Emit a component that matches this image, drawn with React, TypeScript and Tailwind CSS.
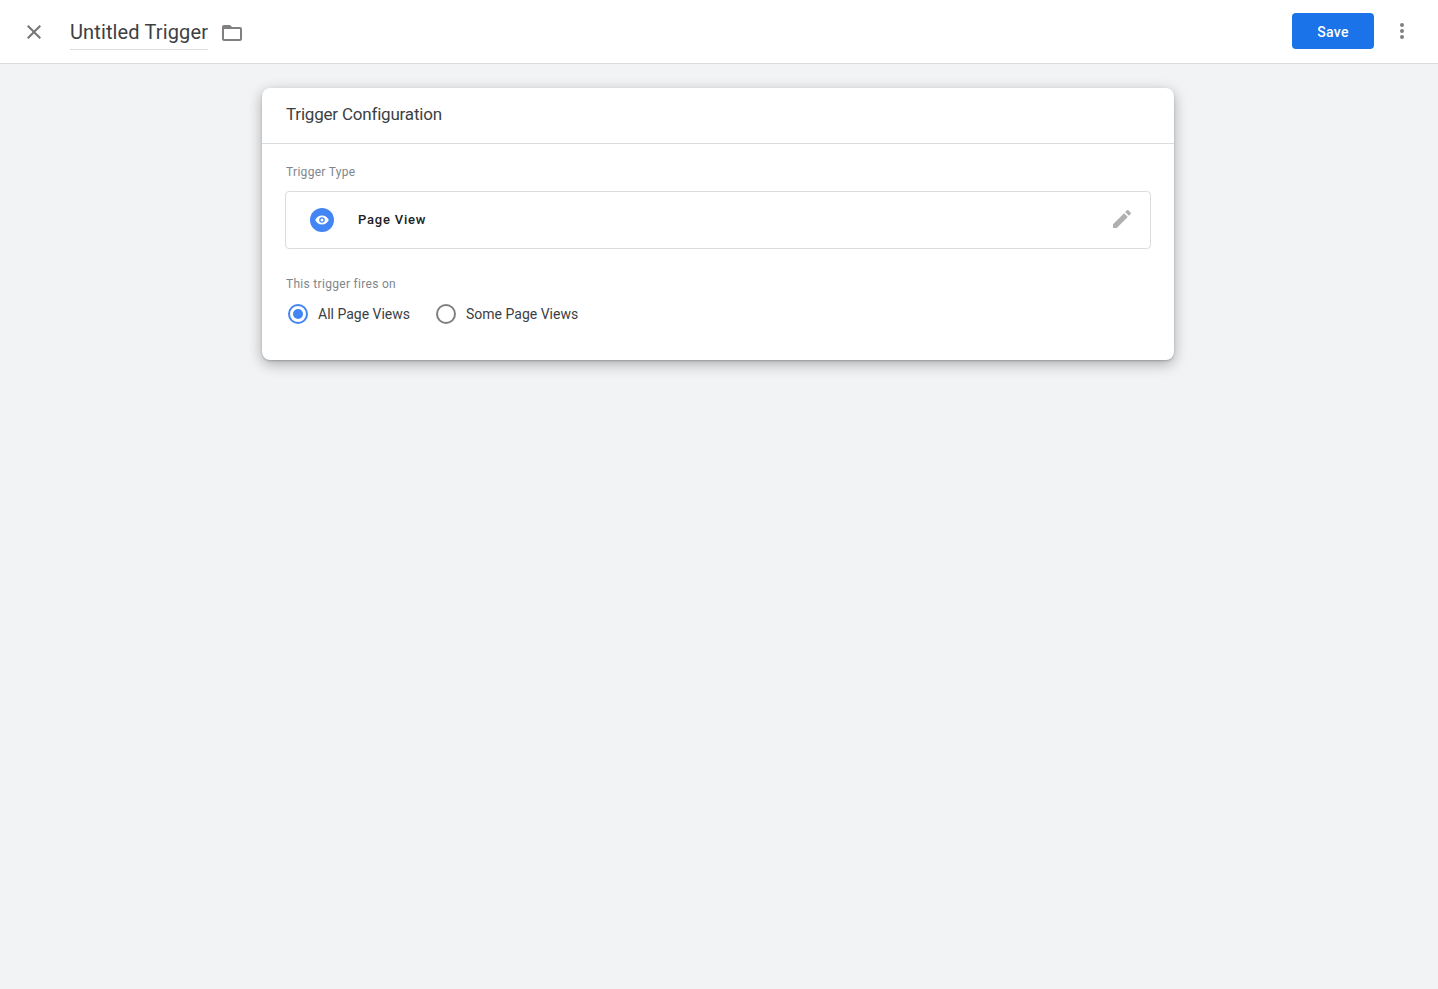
import { useState } from "react";

const sans = "font-['Roboto',sans-serif]";

function CloseIcon() {
  return (
    <svg width="24" height="24" viewBox="0 0 24 24" className="fill-[#757575]">
      <path d="M19 6.41 17.59 5 12 10.59 6.41 5 5 6.41 10.59 12 5 17.59 6.41 19 12 13.41 17.59 19 19 17.59 13.41 12z" />
    </svg>
  );
}

function FolderIcon() {
  return (
    <svg width="24" height="24" viewBox="0 0 24 24" className="fill-[#808080]">
      <path d="M20 6h-8l-2-2H4c-1.1 0-2 .9-2 2v12c0 1.1.9 2 2 2h16c1.1 0 2-.9 2-2V8c0-1.1-.9-2-2-2zm0 12H4V8h16v10z" />
    </svg>
  );
}

function MoreIcon() {
  return (
    <svg width="24" height="24" viewBox="0 0 24 24" className="fill-[#808080]">
      <circle cx="12" cy="6" r="2" />
      <circle cx="12" cy="12" r="2" />
      <circle cx="12" cy="18" r="2" />
    </svg>
  );
}

function PencilIcon() {
  return (
    <svg width="24" height="24" viewBox="0 0 24 24" className="fill-[#b0b0b0]">
      <path d="M3 17.25V21h3.75L17.81 9.94l-3.75-3.75L3 17.25zM20.71 7.04a1 1 0 0 0 0-1.41l-2.34-2.34a1 1 0 0 0-1.41 0l-1.83 1.83 3.75 3.75 1.83-1.83z" />
    </svg>
  );
}

function EyeBadge() {
  return (
    <svg width="24" height="24" viewBox="0 0 24 24">
      <circle cx="12" cy="12" r="12" fill="#4285f4" />
      <path
        d="M12 7.5c-3.1 0-5.7 1.9-6.8 4.5 1.1 2.6 3.7 4.5 6.8 4.5s5.7-1.9 6.8-4.5c-1.1-2.6-3.7-4.5-6.8-4.5z"
        fill="#fff"
      />
      <circle cx="12" cy="12" r="2.8" fill="#4285f4" />
      <circle cx="12" cy="12" r="1.5" fill="#fff" />
    </svg>
  );
}

function Radio({ label, checked, onSelect }: { label: string; checked: boolean; onSelect: () => void }) {
  return (
    <label className="flex items-center cursor-pointer" onClick={onSelect}>
      <span
        className={`flex h-5 w-5 items-center justify-center rounded-full border-2 ${
          checked ? "border-[#4285f4]" : "border-[#808080]"
        }`}
      >
        {checked && <span className="h-[10px] w-[10px] rounded-full bg-[#4285f4]" />}
      </span>
      <span className="ml-[10px] text-sm leading-5 text-[#3c4043]">{label}</span>
    </label>
  );
}

export default function App() {
  const [fires, setFires] = useState("all");

  return (
    <div className={`min-h-[989px] bg-[#f1f3f4] ${sans}`}>
      <header className="flex h-16 items-center border-b border-[#dadce0] bg-white">
        <button className="ml-[22px] flex h-6 w-6 items-center justify-center">
          <CloseIcon />
        </button>
        <div className="ml-6 flex h-9 items-center border-b border-[#dadce0] pt-[2px] text-xl leading-9 tracking-[0.13px] text-[#3c4043]">
          Untitled Trigger
        </div>
        <span className="ml-3 mt-[2px] flex">
          <FolderIcon />
        </span>
        <button className="mb-[2px] ml-auto h-9 w-[82px] rounded bg-[#1a73e8] pt-[2px] text-sm font-medium tracking-[0.25px] text-white">
          Save
        </button>
        <button className="mb-[2px] ml-4 mr-6 flex h-6 w-6 items-center justify-center">
          <MoreIcon />
        </button>
      </header>

      <main className="flex justify-center pr-[2px] pt-6">
        <section className="h-[272px] w-[912px] rounded-lg bg-white shadow-[0_1px_2px_rgba(0,0,0,0.2),0_4px_14px_rgba(0,0,0,0.3)]">
          <h2 className="flex h-[56px] items-center border-b border-[#dadce0] px-6 pb-[2px] text-[17px] tracking-[-0.2px] text-[#3c4043]">
            Trigger Configuration
          </h2>
          <div className="px-6 pt-5">
            <div className="text-xs leading-4 tracking-[0.3px] text-[#80868b]">Trigger Type</div>
            <div className="-mx-px mt-[11px] flex h-[58px] items-center rounded border border-[#dadce0] pl-6 pr-4">
              <EyeBadge />
              <span className="ml-6 pb-px text-[13px] font-medium tracking-[0.8px] text-[#202124]">Page View</span>
              <span className="mb-[2px] ml-auto flex">
                <PencilIcon />
              </span>
            </div>
            <div className="mt-[27px] text-xs leading-4 tracking-[0.3px] text-[#80868b]">This trigger fires on</div>
            <div className="mt-[12px] flex gap-[26px] pl-[2px]">
              <Radio label="All Page Views" checked={fires === "all"} onSelect={() => setFires("all")} />
              <Radio label="Some Page Views" checked={fires === "some"} onSelect={() => setFires("some")} />
            </div>
          </div>
        </section>
      </main>
    </div>
  );
}
